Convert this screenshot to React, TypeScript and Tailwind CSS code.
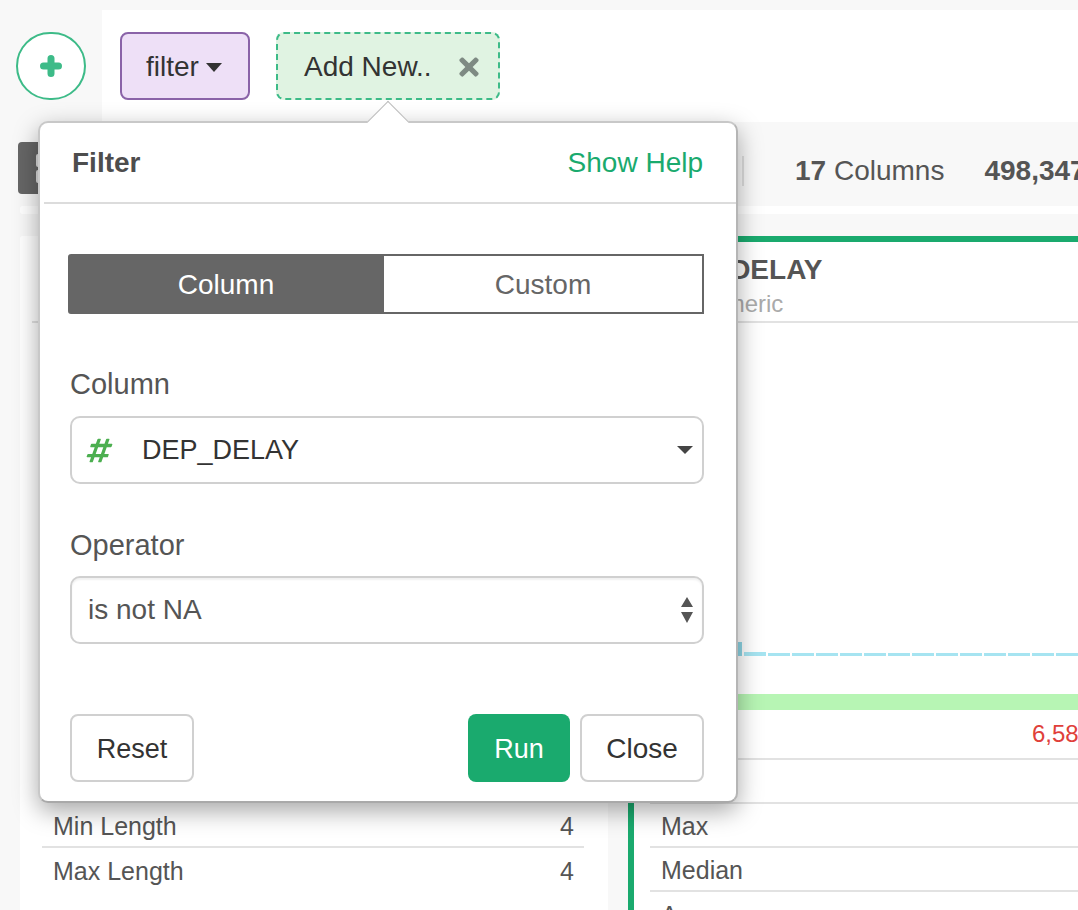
// Filter popover over the column summary view
import { FaHashtag, FaTimes } from "react-icons/fa";

const FONT = "font-['Liberation_Sans',Arial,sans-serif]";

function StatRow({ label, value, last }: { label: string; value?: string; last?: boolean }) {
  return (
    <div className={`flex h-11 shrink-0 items-center justify-between pl-[11px] pr-[10px] pt-[3px] text-[25px] text-[#555] ${last ? "" : "border-b-2 border-[#e2e2e2]"}`}>
      <span>{label}</span>
      {value && <span>{value}</span>}
    </div>
  );
}

function Histogram() {
  return (
    <div className="flex h-[14px] shrink-0 items-end gap-[2px] pl-[86px]">
      <div className="h-[14px] w-[22px] shrink-0 bg-[#8ed6e6]" />
      <div className="h-[4px] w-[22px] shrink-0 bg-[#a6e4f1]" />
      {Array.from({ length: 14 }, (_, i) => (
        <div key={i} className="h-[3px] w-[22px] shrink-0 bg-[#a6e4f1]" />
      ))}
    </div>
  );
}

function Background() {
  return (
    <div className="flex h-full min-w-0 flex-1 flex-col">
      <div className="h-[10px] shrink-0" />
      <div className="flex h-[112px] shrink-0">
        <div className="w-[102px] shrink-0" />
        <div className="flex-1 bg-white" />
      </div>

      {/* summary bar */}
      <div className="flex h-[84px] shrink-0 items-center overflow-hidden pl-[18px] pt-[14px] text-[28px] text-[#555]">
        <div className="-mt-[6px] flex h-[52px] w-[66px] shrink-0 flex-col justify-center gap-[3px] rounded-[4px] bg-[#666] pl-[18px]">
          <div className="h-[13px] w-[8px] rounded-[2px] bg-[#ddd]" />
          <div className="h-[13px] w-[8px] rounded-[2px] bg-[#ddd]" />
        </div>
        <div className="ml-[658px] h-[30px] w-[2px] shrink-0 bg-[#dedede]" />
        <span className="ml-[51px] shrink-0 whitespace-nowrap"><b>17</b> Columns</span>
        <b className="ml-[40px] shrink-0 whitespace-nowrap">498,347</b>
      </div>

      <div className="ml-5 h-2 shrink-0 rounded-l-[3px] bg-white" />

      <div className="flex min-h-0 flex-1 gap-5 overflow-hidden pl-5 pt-[22px]">
        <div className="flex w-[588px] shrink-0 flex-col rounded-t-[3px] bg-white pb-[18px] pl-[22px] pr-[24px]">
          <div className="-ml-[10px] h-[87px] shrink-0 border-b-2 border-[#e2e2e2]" />
          <div className="flex-1" />
          <StatRow label="Min Length" value="4" />
          <StatRow label="Max Length" value="4" last />
        </div>
        <div className="flex min-w-0 flex-1 flex-col border-l-[6px] border-t-[6px] border-[#1aaa6e] bg-white">
          <div className="ml-4 h-[81px] shrink-0 border-b-2 border-[#e2e2e2] pl-[7px]">
            <div className="pt-3 text-[28px] font-bold leading-8 text-[#555]">DEP_DELAY</div>
            <div className="ml-[37px] mt-[6px] text-[24px] leading-6 text-[#aaa]">Numeric</div>
          </div>
          <div className="h-[319px] shrink-0" />
          <Histogram />
          <div className="h-[38px] shrink-0" />
          <div className="h-4 shrink-0 bg-[#b7f5b4]" />
          <div className="ml-4 flex h-[50px] shrink-0 items-center overflow-hidden border-b-2 border-[#e2e2e2] pl-[382px] text-[24px] text-[#e0403a]">
            <span className="whitespace-nowrap">6,58</span>
          </div>
          <div className="ml-4 h-11 shrink-0 border-b-2 border-[#e2e2e2]" />
          <div className="ml-4 flex shrink-0 flex-col">
            <StatRow label="Max" />
            <StatRow label="Median" />
            <StatRow label="Average" last />
          </div>
        </div>
      </div>
    </div>
  );
}

function Popover() {
  return (
    <div className="absolute left-[38px] top-[121px] h-[682px] w-[700px] rounded-[10px] border-2 border-[#c8c8c8] border-b-[#a9a9a9] border-r-[#b5b5b5] bg-white shadow-[0_8px_24px_rgba(0,0,0,0.35)]">
      {/* arrow up to the Add New token */}
      <div className="absolute left-[333px] top-[-16px] h-[30px] w-[30px] rotate-45 border-l border-t border-[#bbb] bg-white" />
      <div className="relative ml-1 flex h-[81px] items-center justify-between border-b-2 border-[#dcdcdc] pl-[28px] pr-[33px] text-[28px]">
        <span className="font-bold text-[#4d4d4d]">Filter</span>
        <span className="text-[#1aaa6e]">Show Help</span>
      </div>

      <div className="px-[30px] pt-[50px]">
        <div className="-ml-[2px] flex h-[60px] w-[636px] rounded-l-[3px] border-2 border-[#666] text-[28px]">
          <div className="flex w-[314px] items-center justify-center bg-[#666] pr-[2px] pt-[1px] text-white">Column</div>
          <div className="flex flex-1 items-center justify-center pt-[1px] text-[#666]">Custom</div>
        </div>

        <div className="mt-[54px] text-[29px] leading-[32px] text-[#555]">Column</div>
        <div className="mt-4 flex h-[68px] w-[634px] items-center rounded-[10px] border-2 border-[#d0d0d0] pl-[14px] pr-[8px]">
          <span className="w-[56px]"><FaHashtag size={27} className="-skew-x-[10deg] text-[#4caf50]" /></span>
          <span className="flex-1 text-[27px] text-[#333]">DEP_DELAY</span>
          <svg width="18" height="10" viewBox="0 0 18 10"><path d="M1 1h16l-8 8z" fill="#444" /></svg>
        </div>

        <div className="mt-[45px] text-[29px] leading-[32px] text-[#555]">Operator</div>
        <div className="mt-[15px] flex h-[68px] w-[634px] items-center rounded-[10px] border-2 border-[#d0d0d0] pl-[16px] pr-[8px] shadow-[inset_0_2px_2px_rgba(0,0,0,0.06)]">
          <span className="flex-1 text-[28px] text-[#555]">is not NA</span>
          <svg width="14" height="28" viewBox="0 0 14 28"><path d="M7 1l6 10H1zM1 16h12l-6 11z" fill="#555" /></svg>
        </div>

        <div className="mt-[70px] flex w-[634px] gap-[10px] pt-0 text-[27px] text-[#333]">
          <div className="mr-auto flex h-[68px] w-[124px] items-center justify-center rounded-[8px] border-2 border-[#d0d0d0] pt-[2px]">Reset</div>
          <div className="flex h-[68px] w-[102px] items-center justify-center rounded-[8px] bg-[#1aaa6e] pt-[2px] text-white">Run</div>
          <div className="flex h-[68px] w-[124px] items-center justify-center rounded-[8px] border-2 border-[#d0d0d0] pt-[2px] text-[28px]">Close</div>
        </div>
      </div>
    </div>
  );
}

export default function App() {
  return (
    <div className={`relative h-[910px] w-[1078px] overflow-hidden bg-[#f8f8f8] ${FONT}`}>
      <div className="absolute inset-0 flex"><Background /></div>

      <div className="absolute left-4 top-8 flex h-[68px] w-[70px] items-center justify-center rounded-full border-2 border-[#3dbb88] bg-white">
        <svg width="22" height="22" viewBox="0 0 22 22">
          <path d="M11 3.5v15M3.5 11h15" stroke="#3dbb88" strokeWidth="7" strokeLinecap="round" />
        </svg>
      </div>
      <div className="absolute left-[120px] top-8 flex h-[68px] w-[130px] items-center justify-center gap-[7px] rounded-[8px] border-2 border-[#8a63a8] bg-[#eee0f7] pr-[2px] pt-[2px] text-[28px] text-[#333]">
        filter
        <svg width="16" height="9" viewBox="0 0 16 9"><path d="M0 0h16L8 9z" fill="#333" /></svg>
      </div>
      <div className="absolute left-[276px] top-8 flex h-[68px] w-[224px] items-center rounded-[8px] border-2 border-dashed border-[#3dbb88] bg-[#e0f3e2] pl-[26px] pt-[2px] text-[28px] text-[#333]">
        Add New..
        <FaTimes size={28} className="ml-[23px] shrink-0 text-[#7e8a83]" />
      </div>

      <Popover />
    </div>
  );
}
